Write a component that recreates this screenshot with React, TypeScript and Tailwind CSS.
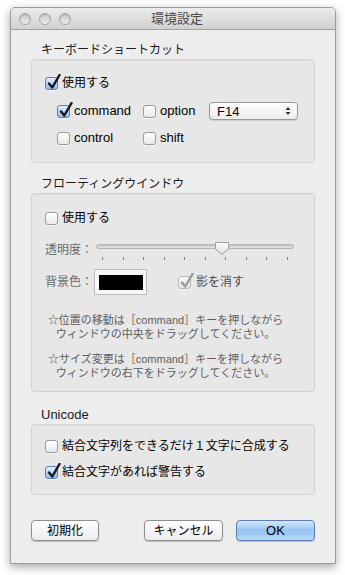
import React from "react";

type CbProps = { checked?: boolean; disabled?: boolean };

function Checkbox({ checked = false, disabled = false }: CbProps) {
  const box = checked && !disabled
    ? "border-[#5c7fb0] bg-gradient-to-b from-[#e3efff] to-[#93c0f0]"
    : disabled
    ? "border-[#b8b8b8] bg-gradient-to-b from-[#fafafa] to-[#e6e6e6]"
    : "border-[#9a9a9a] bg-gradient-to-b from-[#ffffff] to-[#e9e9e9]";
  return (
    <div className={`relative w-[13px] h-[13px] shrink-0 rounded-[3px] border ${box} shadow-[0_1px_0_rgba(255,255,255,0.6)]`}>
      {checked && (
        <svg
          className="absolute left-[1px] top-[-4px]"
          width="14"
          height="17"
          viewBox="0 0 14 17"
        >
          <path
            d="M2 9.5 L5.3 13.5 L12.5 1"
            fill="none"
            stroke={disabled ? "#9c9c9c" : "#1b1b1b"}
            strokeWidth="2.5"
            strokeLinecap="round"
            strokeLinejoin="round"
          />
        </svg>
      )}
    </div>
  );
}

function GroupBox({ className = "", children }: { className?: string; children?: React.ReactNode }) {
  return (
    <div className={`w-full rounded-[4px] border border-[#d2d2d2] bg-[#e7e7e7] shadow-[inset_0_1px_0_rgba(0,0,0,0.03)] ${className}`}>
      {children}
    </div>
  );
}

function Light() {
  return (
    <div className="w-[12px] h-[12px] rounded-full border border-[#a6a6a6] bg-gradient-to-b from-[#c9c9c9] to-[#ededed] shadow-[inset_0_1px_1px_rgba(0,0,0,0.15)]" />
  );
}

export default function App() {
  const ticks = Array.from({ length: 10 });
  return (
    <div
      className="w-[345px] h-[575px] bg-white pt-[7px] pl-[10px]"
      style={{ fontFamily: '"Liberation Sans", "Noto Sans CJK JP", sans-serif' }}
    >
      <div className="w-[326px] h-[557px] flex flex-col border border-[#9c9c9c] rounded-t-[5px] shadow-[0_3px_10px_rgba(0,0,0,0.35)] bg-[#ededed] overflow-hidden">
        {/* title bar */}
        <div className="relative h-[22px] shrink-0 flex items-center border-b border-[#a3a3a3] bg-gradient-to-b from-[#ececec] to-[#d1d1d1]">
          <div className="flex items-center gap-[8px] pl-[8px]">
            <Light />
            <Light />
            <Light />
          </div>
          <div className="absolute inset-0 flex items-center justify-center text-[13px] text-[#4a4a4a] pl-[8px]">
            環境設定
          </div>
        </div>

        {/* body */}
        <div className="flex-1 flex flex-col px-[20px] pt-[12px] text-black">
          {/* keyboard shortcut */}
          <div className="h-[16px] ml-[10px] text-[12px] leading-[16px] text-[#1a1a1a]">キーボードショートカット</div>
          <GroupBox className="mt-[1px] h-[104px] pt-[13px] pl-[13px]">
            <div className="h-[20px] flex items-center gap-[4px]">
              <Checkbox checked />
              <span className="text-[12px]">使用する</span>
            </div>
            <div className="mt-[8px] h-[20px] ml-[12px] flex items-center">
              <div className="w-[86px] flex items-center gap-[4px]">
                <Checkbox checked />
                <span className="text-[13px]">command</span>
              </div>
              <div className="w-[66px] flex items-center gap-[4px]">
                <Checkbox />
                <span className="text-[13px]">option</span>
              </div>
              <div className="w-[89px] h-[18px] flex items-center justify-between pl-[7px] pr-[6px] rounded-[4px] border border-[#9a9a9a] bg-gradient-to-b from-[#ffffff] to-[#ececec] shadow-[0_1px_1px_rgba(0,0,0,0.12)]">
                <span className="text-[13px] leading-none">F14</span>
                <svg width="6" height="10" viewBox="0 0 6 10">
                  <path d="M0.5 4 L3 1 L5.5 4 Z" fill="#333" />
                  <path d="M0.5 6 L3 9 L5.5 6 Z" fill="#333" />
                </svg>
              </div>
            </div>
            <div className="mt-[7px] h-[20px] ml-[12px] flex items-center">
              <div className="w-[86px] flex items-center gap-[4px]">
                <Checkbox />
                <span className="text-[13px]">control</span>
              </div>
              <div className="w-[66px] flex items-center gap-[4px]">
                <Checkbox />
                <span className="text-[13px]">shift</span>
              </div>
            </div>
          </GroupBox>

          {/* floating window */}
          <div className="mt-[13px] h-[16px] ml-[10px] text-[12px] leading-[16px] text-[#1a1a1a]">フローティングウインドウ</div>
          <GroupBox className="mt-[1px] h-[199px] pt-[14px]">
            <div className="pl-[13px] h-[20px] flex items-center gap-[4px]">
              <Checkbox />
              <span className="text-[12px]">使用する</span>
            </div>
            <div className="pl-[13px] mt-[12px] flex items-start">
              <div className="w-[51px] h-[20px] flex items-center text-[12px] text-[#6b6b6b]">透明度：</div>
              <div className="relative w-[198px] h-[22px]">
                <div className="mt-[4px] h-[5px] rounded-full border border-[#b4b4b4] bg-gradient-to-b from-[#c4c4c4] to-[#e4e4e4]" />
                <div className="mt-[8px] flex justify-between px-[6px]">
                  {ticks.map((_, i) => (
                    <div key={i} className="w-[1px] h-[3px] bg-[#7e7e7e]" />
                  ))}
                </div>
                <svg className="absolute left-[118px] top-[1px]" width="16" height="15" viewBox="0 0 16 15">
                  <defs>
                    <linearGradient id="kn" x1="0" y1="0" x2="0" y2="1">
                      <stop offset="0" stopColor="#ffffff" />
                      <stop offset="1" stopColor="#dcdcdc" />
                    </linearGradient>
                  </defs>
                  <path d="M1.5 1.5 H14.5 V8 L8 13.5 L1.5 8 Z" fill="url(#kn)" stroke="#9e9e9e" strokeWidth="1" strokeLinejoin="round" />
                </svg>
              </div>
            </div>
            <div className="pl-[13px] mt-[7px] h-[26px] flex items-center">
              <div className="w-[49px] text-[12px] text-[#6b6b6b]">背景色：</div>
              <div className="w-[53px] h-[26px] flex items-center justify-center border border-[#bdbdbd] bg-[#f7f7f7]">
                <div className="w-[44px] h-[15px] bg-black" />
              </div>
              <div className="ml-[31px] flex items-center gap-[5px]">
                <Checkbox checked disabled />
                <span className="text-[12px] text-[#4a4a4a]">影を消す</span>
              </div>
            </div>
            <div className="mt-[18px] w-[267px] text-center text-[11px] leading-[14px] text-[#5e5e5e]">
              <div>☆位置の移動は［command］キーを押しながら</div>
              <div>ウィンドウの中央をドラッグしてください。</div>
            </div>
            <div className="mt-[11px] w-[267px] text-center text-[11px] leading-[14px] text-[#5e5e5e]">
              <div>☆サイズ変更は［command］キーを押しながら</div>
              <div>ウィンドウの右下をドラッグしてください。</div>
            </div>
          </GroupBox>

          {/* unicode */}
          <div className="mt-[15px] h-[16px] ml-[10px] text-[13px] leading-[16px] text-[#1a1a1a]">Unicode</div>
          <GroupBox className="mt-[1px] h-[71px] pt-[11px] pl-[13px]">
            <div className="h-[20px] flex items-center gap-[4px]">
              <Checkbox />
              <span className="text-[12px]">結合文字列をできるだけ１文字に合成する</span>
            </div>
            <div className="mt-[6px] h-[20px] flex items-center gap-[4px]">
              <Checkbox checked />
              <span className="text-[12px]">結合文字があれば警告する</span>
            </div>
          </GroupBox>

          {/* buttons */}
          <div className="mt-[25px] h-[21px] flex justify-between">
            <button className="w-[68px] h-[21px] rounded-[4px] border border-[#8f8f8f] bg-gradient-to-b from-[#ffffff] to-[#ececec] shadow-[0_1px_1px_rgba(0,0,0,0.2)] text-[12px] text-black">
              初期化
            </button>
            <div className="flex gap-[13px]">
              <button className="w-[79px] h-[21px] rounded-[4px] border border-[#8f8f8f] bg-gradient-to-b from-[#ffffff] to-[#ececec] shadow-[0_1px_1px_rgba(0,0,0,0.2)] text-[12px] text-black">
                キャンセル
              </button>
              <button className="w-[79px] h-[21px] rounded-[4px] border border-[#5b7db3] bg-gradient-to-b from-[#d4e7fc] via-[#95c3f3] to-[#b7daf9] shadow-[0_1px_1px_rgba(0,0,0,0.2)] text-[13px] text-black">
                OK
              </button>
            </div>
          </div>
        </div>
      </div>
    </div>
  );
}
